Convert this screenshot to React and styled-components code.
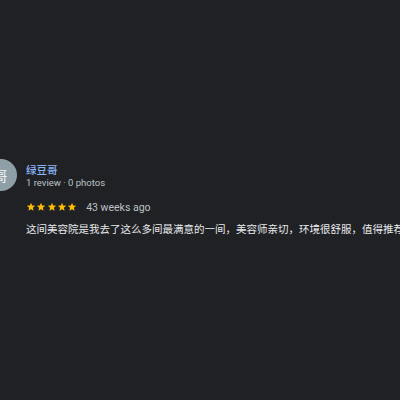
import React from "react";
import styled, { createGlobalStyle } from "styled-components";

const Global = createGlobalStyle`
  html, body { margin: 0; padding: 0; background: #202124; }
  body { width: 400px; height: 400px; overflow: hidden; font-family: Roboto, "Noto Sans CJK SC", sans-serif; }
`;

const Page = styled.div`
  width: 400px;
  height: 400px;
  background: #202124;
  padding-top: 159px;
  box-sizing: border-box;
  overflow: hidden;
`;

const Review = styled.div`
  display: flex;
  flex-direction: column;
  margin-left: -15px;
`;

const Header = styled.div`
  display: flex;
  align-items: center;
  gap: 9px;
`;

const Avatar = styled.div`
  width: 32px;
  height: 32px;
  border-radius: 50%;
  background: #8f9fa8;
  color: #f1f3f4;
  display: flex;
  align-items: center;
  justify-content: center;
  font-size: 13px;
  flex-shrink: 0;
  font-family: "Noto Sans CJK SC", sans-serif;
`;

const Info = styled.div`
  display: flex;
  flex-direction: column;
  gap: 1px;
  padding-top: 1px;
`;

const Name = styled.div`
  color: #8ab4f8;
  font-size: 10.5px;
  line-height: 13px;
  font-weight: 500;
  font-family: "Noto Sans CJK SC", sans-serif;
`;

const Meta = styled.div`
  color: #bdc1c6;
  font-size: 9.5px;
  line-height: 12px;
`;

const Body = styled.div`
  padding-left: 41px;
  display: flex;
  flex-direction: column;
`;

const RatingRow = styled.div`
  display: flex;
  align-items: center;
  gap: 9px;
  margin-top: 9px;
  height: 14px;
`;

const Stars = styled.div`
  display: flex;
  gap: 0.3px;
`;

const Ago = styled.span`
  color: #bdc1c6;
  font-size: 10.5px;
`;

const Text = styled.div`
  color: #e8eaed;
  font-size: 10.5px;
  line-height: 14px;
  margin-top: 8px;
  white-space: nowrap;
  font-family: "Noto Sans CJK SC", sans-serif;
`;

const Star = () => (
  <svg width="10" height="10" viewBox="0 0 24 24">
    <path
      fill="#fbbc04"
      d="M12 17.27L18.18 21l-1.64-7.03L22 9.24l-7.19-.61L12 2 9.19 8.63 2 9.24l5.46 4.73L5.82 21z"
    />
  </svg>
);

export default function App() {
  return (
    <>
      <Global />
      <Page>
        <Review>
          <Header>
            <Avatar>哥</Avatar>
            <Info>
              <Name>绿豆哥</Name>
              <Meta>1 review · 0 photos</Meta>
            </Info>
          </Header>
          <Body>
            <RatingRow>
              <Stars>
                {[0, 1, 2, 3, 4].map((i) => (
                  <Star key={i} />
                ))}
              </Stars>
              <Ago>43 weeks ago</Ago>
            </RatingRow>
            <Text>
              这间美容院是我去了这么多间最满意的一间，美容师亲切，环境很舒服，值得推荐
            </Text>
          </Body>
        </Review>
      </Page>
    </>
  );
}
